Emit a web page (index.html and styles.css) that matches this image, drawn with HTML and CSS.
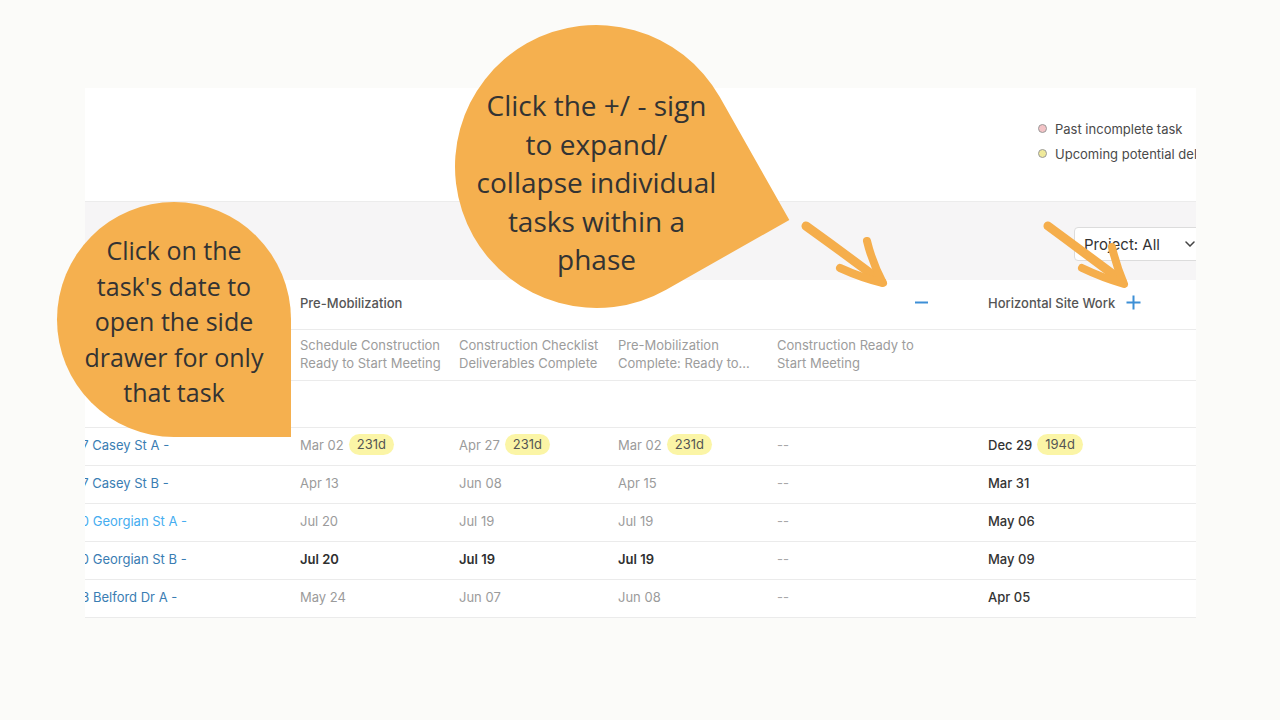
FILE: index.html
```html
<!DOCTYPE html>
<html lang="en">
<head>
  <meta charset="UTF-8" />
  <meta name="viewport" content="width=device-width, initial-scale=1.0"/>
  <title>Schedule - Phase View</title>
  <link rel="stylesheet" href="styles.css">
</head>
<body>
  <div class="board">
    <div class="board-top">
      <ul class="legend">
        <li><span class="dot dot-past"></span>Past incomplete task</li>
        <li><span class="dot dot-upcoming"></span>Upcoming potential delay</li>
      </ul>
    </div>

    <div class="filters">
      <div class="select">
        <span>Project: All</span>
        <svg class="chevron" width="10" height="6" viewBox="0 0 10 6"><path d="M1 1l4 4 4-4" fill="none" stroke="#444" stroke-width="1.5" stroke-linecap="round"/></svg>
      </div>
    </div>

    <div class="sheet">
      <div class="row row-phase">
        <div class="cell"></div>
        <div class="cell phase phase-wide">
          <span>Pre-Mobilization</span>
          <button class="toggle" title="Collapse"><svg width="15" height="15" viewBox="0 0 15 15"><path d="M1 7.5h13" stroke="#3d8fd6" stroke-width="2"/></svg></button>
        </div>
        <div class="cell phase">
          <span>Horizontal Site Work</span>
          <button class="toggle" title="Expand"><svg width="15" height="15" viewBox="0 0 15 15"><path d="M0.5 7.5h14M7.5 0.5v14" stroke="#3d8fd6" stroke-width="2"/></svg></button>
        </div>
      </div>

      <div class="row row-tasks">
        <div class="cell"></div>
        <div class="cell task">Schedule Construction<br>Ready to Start Meeting</div>
        <div class="cell task">Construction Checklist<br>Deliverables Complete</div>
        <div class="cell task">Pre-Mobilization<br>Complete: Ready to...</div>
        <div class="cell task">Construction Ready to<br>Start Meeting</div>
        <div class="cell"></div>
        <div class="cell"></div>
      </div>

      <div class="row row-blank"></div>

      <div class="row row-data">
        <div class="cell"><a class="site" href="#">457 Casey St A -</a></div>
        <div class="cell date">Mar 02 <span class="late">231d</span></div>
        <div class="cell date">Apr 27 <span class="late">231d</span></div>
        <div class="cell date">Mar 02 <span class="late">231d</span></div>
        <div class="cell empty">--</div>
        <div class="cell"></div>
        <div class="cell date next">Dec 29 <span class="late">194d</span></div>
      </div>
      <div class="row row-data">
        <div class="cell"><a class="site" href="#">457 Casey St B -</a></div>
        <div class="cell date">Apr 13</div>
        <div class="cell date">Jun 08</div>
        <div class="cell date">Apr 15</div>
        <div class="cell empty">--</div>
        <div class="cell"></div>
        <div class="cell date next">Mar 31</div>
      </div>
      <div class="row row-data">
        <div class="cell"><a class="site site-active" href="#">220 Georgian St A -</a></div>
        <div class="cell date">Jul 20</div>
        <div class="cell date">Jul 19</div>
        <div class="cell date">Jul 19</div>
        <div class="cell empty">--</div>
        <div class="cell"></div>
        <div class="cell date next">May 06</div>
      </div>
      <div class="row row-data">
        <div class="cell"><a class="site" href="#">220 Georgian St B -</a></div>
        <div class="cell date done">Jul 20</div>
        <div class="cell date done">Jul 19</div>
        <div class="cell date done">Jul 19</div>
        <div class="cell empty">--</div>
        <div class="cell"></div>
        <div class="cell date next">May 09</div>
      </div>
      <div class="row row-data">
        <div class="cell"><a class="site" href="#">453 Belford Dr A -</a></div>
        <div class="cell date">May 24</div>
        <div class="cell date">Jun 07</div>
        <div class="cell date">Jun 08</div>
        <div class="cell empty">--</div>
        <div class="cell"></div>
        <div class="cell date next">Apr 05</div>
      </div>
    </div>
  </div>

  <!-- callouts -->
  <div class="bubble bubble-date">
    <p>Click on the<br>task's date to<br>open the side<br>drawer for only<br>that task</p>
  </div>
  <div class="bubble bubble-toggle">
    <p>Click the +/ - sign<br>to expand/<br>collapse individual<br>tasks within a<br>phase</p>
  </div>

  <svg class="arrows" width="1280" height="720" viewBox="0 0 1280 720">
    <g fill="none" stroke="#f5ae4c" stroke-linecap="round" stroke-linejoin="round">
      <path d="M806 226 Q845 254 882 282" stroke-width="9"/>
      <path d="M867 241 Q872 262 883 283 Q862 278 840 268" stroke-width="8"/>
      <path d="M1048 226 Q1086 254 1122 281" stroke-width="9"/>
      <path d="M1112 247 Q1116 265 1124 284 Q1103 278 1082 268" stroke-width="8"/>
    </g>
  </svg>
</body>
</html>
```

FILE: styles.css
```css
body {
  margin: 0;
  background: #fbfbf9;
  font-family: 'Inter', 'Liberation Sans', sans-serif;
  color: #333333;
}

.board {
  width: 1111px;
  margin: 88px 0 0 85px;
  background: #ffffff;
  overflow: hidden;
}

.board-top {
  height: 113px;
  padding: 28px 0 0 953px;
  box-sizing: border-box;
}

.legend {
  list-style: none;
  margin: 0;
  padding: 0;
  font-size: 13px;
  color: #4a4a4a;
  white-space: nowrap;
}

.legend li {
  display: flex;
  align-items: center;
  height: 25px;
  gap: 8px;
}

.dot {
  flex-shrink: 0;
  width: 9px;
  height: 9px;
  border-radius: 50%;
  border: 1px solid #9a9a9a;
  box-sizing: border-box;
}

.dot-past {
  background: #f3c3c6;
}

.dot-upcoming {
  background: #efe99a;
}

.filters {
  height: 79px;
  background: #f6f5f6;
  border-top: 1px solid #ececec;
  box-sizing: border-box;
  padding: 25px 0 0 989px;
}

.select {
  display: flex;
  align-items: center;
  width: 140px;
  height: 34px;
  box-sizing: border-box;
  padding: 0 10px 0 9px;
  background: #ffffff;
  border: 1px solid #dcdcdc;
  border-radius: 4px;
  font-size: 15px;
  color: #333333;
  white-space: nowrap;
}

.chevron {
  margin-left: 25px;
}

.sheet {
  margin-left: -30px;
}

.row {
  display: grid;
  grid-template-columns: 235px repeat(4, 159px) 52px 240px;
  border-bottom: 1px solid #ebebeb;
  box-sizing: border-box;
}

.row-phase {
  height: 50px;
}

.row-tasks {
  height: 51px;
}

.row-blank {
  height: 47px;
}

.row-data {
  height: 38px;
}

.cell {
  display: flex;
  align-items: center;
  padding: 0 0 4px 10px;
  font-size: 13px;
  white-space: nowrap;
  min-width: 0;
}

.row-tasks .cell {
  padding-bottom: 2px;
}

.phase {
  gap: 11px;
  color: #555555;
  font-weight: 500;
}

.phase-wide {
  grid-column: 2 / 7;
  justify-content: space-between;
  padding-right: 49px;
}

.toggle {
  border: 0;
  padding: 0;
  background: none;
  display: flex;
  cursor: pointer;
}

.task {
  color: #9c9c9c;
  line-height: 18px;
}

.site {
  color: #3a7db3;
  font-weight: 400;
  text-decoration: none;
}

.site-active {
  color: #45adf0;
}

.date {
  color: #9b9b9b;
  gap: 5px;
}

.done {
  color: #2f2f2f;
  font-weight: 600;
}

.next {
  color: #333333;
  font-weight: 500;
}

.empty {
  color: #a8a8a8;
}

.late {
  display: inline-block;
  padding: 2px 8px;
  line-height: 17px;
  border-radius: 11px;
  background: #fbf5a6;
  color: #555555;
  font-weight: 400;
}

.bubble {
  position: absolute;
  display: flex;
  justify-content: center;
  color: #333333;
  font-family: 'Open Sans', 'Liberation Sans', sans-serif;
  text-align: center;
}

.bubble::before {
  content: "";
  position: absolute;
  inset: 0;
  background: #f5b04f;
  border-radius: 50% 50% 0 50%;
}

.bubble p {
  position: relative;
  margin: 0;
  white-space: nowrap;
}

.bubble-date {
  left: 57px;
  top: 202px;
  width: 234px;
  height: 235px;
  padding-top: 31px;
  box-sizing: border-box;
  font-size: 25px;
  line-height: 35.5px;
}

.bubble-toggle {
  left: 455px;
  top: 25px;
  width: 283px;
  height: 283px;
  padding-top: 61px;
  box-sizing: border-box;
  font-size: 28px;
  line-height: 38.5px;
}

.bubble-toggle::before {
  transform: rotate(-29.5deg);
}

.arrows {
  position: absolute;
  left: 0;
  top: 0;
  pointer-events: none;
}
```
